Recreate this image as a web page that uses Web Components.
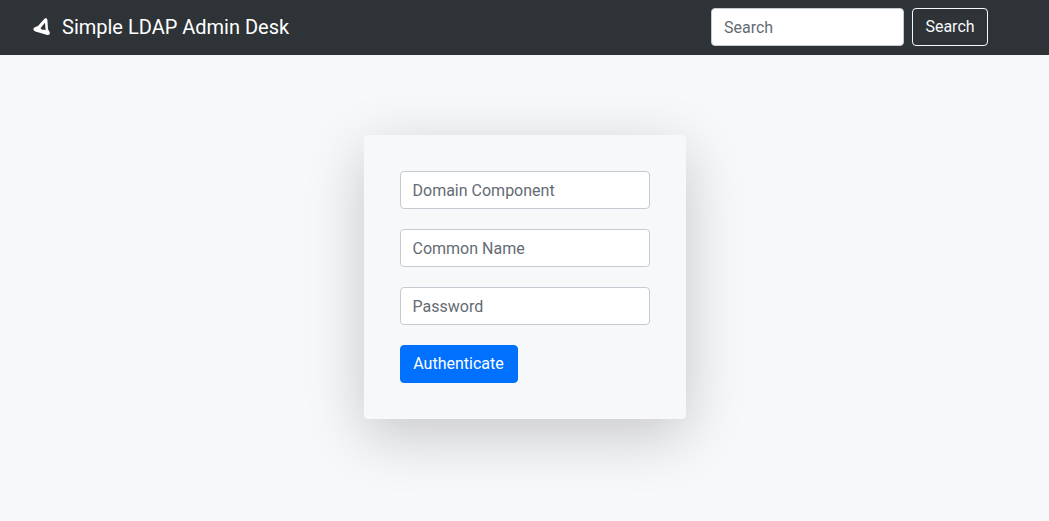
<!DOCTYPE html>
<html lang="en">
<head>
<meta charset="utf-8">
<meta name="viewport" content="width=device-width, initial-scale=1">
<title>Simple LDAP Admin Desk</title>
<style>
  body {
    margin: 0;
    background: #f7f8fa;
    color: #212529;
    font-family: Roboto, "Liberation Sans", sans-serif;
    font-size: 16px;
    line-height: 24px;
    --field-border: #c5cbd3;
    --placeholder: #646b73;
  }
</style>
</head>
<body>
<desk-navbar>
  <desk-brand slot="brand" href="#">Simple LDAP Admin Desk</desk-brand>
  <desk-search slot="actions"></desk-search>
</desk-navbar>
<login-card></login-card>

<script>
const fieldStyles = `
  input, button {
    box-sizing: border-box;
    height: 38px;
    margin: 0;
    padding: 6px 12px;
    border-radius: 4px;
    font: inherit;
  }
  input {
    width: 100%;
    min-width: 0;
    border: 1px solid var(--field-border);
    background: #fff;
    color: #495057;
  }
  input::placeholder { color: var(--placeholder); opacity: 1; }
  button { cursor: pointer; white-space: nowrap; }
`;

function define(name, html) {
  const template = document.createElement('template');
  template.innerHTML = html;
  customElements.define(name, class extends HTMLElement {
    constructor() {
      super();
      this.attachShadow({ mode: 'open' }).append(template.content.cloneNode(true));
    }
    connectedCallback() {
      const link = this.shadowRoot.querySelector('a');
      if (link && this.hasAttribute('href')) link.setAttribute('href', this.getAttribute('href'));
      const input = this.shadowRoot.querySelector('input');
      if (input && this.hasAttribute('label')) {
        input.placeholder = this.getAttribute('label');
        input.setAttribute('aria-label', this.getAttribute('label'));
        input.type = this.getAttribute('type') || 'text';
      }
    }
  });
}

define('desk-navbar', `
  <style>
    :host { display: block; background: #2d3337; }
    nav {
      display: flex;
      align-items: center;
      justify-content: space-between;
      gap: 16px;
      padding: 8px 61px 9px 32px;
    }
  </style>
  <nav><slot name="brand"></slot><slot name="actions"></slot></nav>
`);

define('desk-brand', `
  <style>
    :host { display: block; }
    a {
      display: flex;
      align-items: center;
      gap: 10px;
      color: #fff;
      font-size: 20px;
      line-height: 30px;
      text-decoration: none;
      white-space: nowrap;
    }
    svg { display: block; width: 20px; height: 20px; }
  </style>
  <a>
    <svg viewBox="0 0 20 20" aria-hidden="true">
      <path fill="#fff" fill-rule="evenodd" d="M12.2 1.9C13.2 0.6 15.3 1.2 15.4 3L16 12.2L17.6 15C18.4 16.8 17.2 18.5 15.3 18L3.4 14.6C0.9 13.8 0.8 11 3.3 10.1L6 9.1ZM13 5.8L8.4 11.3C9.2 11.6 9.5 12.1 9.5 12.6L13.6 13Z"/>
    </svg>
    <span><slot></slot></span>
  </a>
`);

define('desk-search', `
  <style>
    ${fieldStyles}
    :host { display: block; }
    form { display: flex; gap: 8px; margin: 0; }
    input { width: 193px; }
    button { border: 1px solid #f8f9fa; background: transparent; color: #f8f9fa; min-width: 76px; }
  </style>
  <form role="search">
    <input type="search" placeholder="Search" aria-label="Search">
    <button type="button">Search</button>
  </form>
`);

define('desk-field', `
  <style>${fieldStyles} :host { display: block; } input { display: block; }</style>
  <input>
`);

define('login-card', `
  <style>
    ${fieldStyles}
    :host { display: flex; justify-content: center; padding: 80px 16px; }
    form {
      box-sizing: border-box;
      display: flex;
      flex-direction: column;
      align-items: stretch;
      gap: 20px;
      width: 100%;
      max-width: 322px;
      padding: 36px;
      border-radius: 4px;
      background: #f7f8fa;
      box-shadow: 0 16px 60px rgba(0, 0, 0, 0.2);
    }
    button { align-self: flex-start; min-width: 118px; border: 1px solid #0070ff; background: #0070ff; color: #fff; }
  </style>
  <form>
    <desk-field label="Domain Component"></desk-field>
    <desk-field label="Common Name"></desk-field>
    <desk-field label="Password" type="password"></desk-field>
    <button type="button">Authenticate</button>
  </form>
`);
</script>
</body>
</html>
